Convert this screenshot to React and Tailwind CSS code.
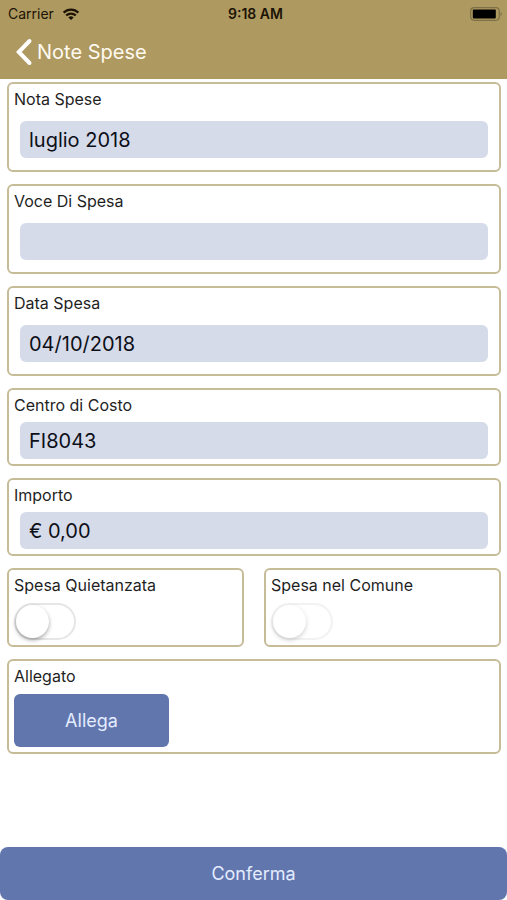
import { useState } from "react";

function StatusBar() {
  return (
    <div className="grid h-7 grid-cols-3 items-center pr-1 pl-2 text-sm text-[#1c1306]">
      <div className="flex items-center gap-2">
        <span>Carrier</span>
        <svg viewBox="0 0 18 13" className="h-3 w-[18px]" aria-hidden="true">
          <g fill="none" stroke="currentColor" strokeWidth="2.4">
            <path d="M1 5a11.3 11.3 0 0 1 16 0" />
            <path d="M3.8 8.2a7.4 7.4 0 0 1 10.4 0" />
          </g>
          <path d="M9 13 6.1 10.3a4.1 4.1 0 0 1 5.8 0z" fill="currentColor" />
        </svg>
      </div>
      <span className="text-center font-semibold">9:18 AM</span>
      <svg
        viewBox="0 0 33 14"
        className="h-[14px] w-[33px] justify-self-end"
        aria-hidden="true"
      >
        <rect
          x="0.7"
          y="0.7"
          width="28.6"
          height="12.6"
          rx="3.5"
          fill="none"
          stroke="#7d7147"
          strokeWidth="1.2"
        />
        <rect x="2.8" y="2.6" width="23" height="8.8" rx="0.8" fill="#000" />
        <path d="M30.6 4.8a2.6 2.6 0 0 1 0 4.4z" fill="#7d7147" />
      </svg>
    </div>
  );
}

function Header() {
  return (
    <header className="h-[79px] bg-[#ae9960]">
      <StatusBar />
      <nav className="flex h-12 items-center pl-4">
        <button type="button" className="flex items-center gap-1 text-white">
          <svg viewBox="0 0 17 28" className="h-7 w-[17px]" aria-hidden="true">
            <path
              d="M13.5 3 2.8 14l10.7 11"
              fill="none"
              stroke="currentColor"
              strokeWidth="4"
              strokeLinecap="round"
            />
          </svg>
          <span className="text-xl text-[#fffaf0]">Note Spese</span>
        </button>
      </nav>
    </header>
  );
}

function Card({ className = "", children }) {
  return (
    <div
      className={`rounded-md border-2 border-[#c6bc98] px-[5px] pt-[5px] ${className}`}
    >
      {children}
    </div>
  );
}

function Field({ id, label, value, onChange, spaced }) {
  return (
    <Card className={spaced ? "pb-3" : "pb-[5px]"}>
      <label htmlFor={id} className="block text-base leading-5">
        {label}
      </label>
      <div className={spaced ? "px-[6px] pt-3" : "px-[6px] pt-[7px]"}>
        <input
          id={id}
          type="text"
          value={value}
          onChange={(e) => onChange(id, e.target.value)}
          className="block h-[37px] w-full rounded-md bg-[#d6dbe9] px-[9px] text-xl text-[#0d0f18] outline-none"
        />
      </div>
    </Card>
  );
}

function Toggle({ id, label, checked, onChange, disabled }) {
  return (
    <Card className="pb-[5px]">
      <label htmlFor={id} className="block text-base leading-5">
        {label}
      </label>
      <input
        id={id}
        type="checkbox"
        role="switch"
        checked={checked}
        disabled={disabled}
        onChange={(e) => onChange(id, e.target.checked)}
        className="mt-2 block h-[37px] w-[62px] appearance-none rounded-full border-2 border-[#e6e6e8] bg-white before:block before:size-[33px] before:rounded-full before:bg-white before:shadow-[0_2px_4px_rgba(0,0,0,0.35)] checked:bg-[#6276ae] checked:before:translate-x-[25px] disabled:opacity-50"
      />
    </Card>
  );
}

function App() {
  const [form, setForm] = useState({
    nota: "luglio 2018",
    voce: "",
    data: "04/10/2018",
    centro: "FI8043",
    importo: "€ 0,00",
    quietanzata: false,
    comune: false,
  });

  const update = (id, value) => setForm({ ...form, [id]: value });

  return (
    <div className="flex min-h-screen flex-col bg-white font-[Inter,sans-serif] text-[#1f1f1f]">
      <Header />
      <form
        className="flex flex-1 flex-col"
        onSubmit={(e) => e.preventDefault()}
      >
        <div className="flex flex-col gap-3 pt-[3px] pr-[6px] pb-6 pl-[7px]">
          <Field id="nota" label="Nota Spese" value={form.nota} onChange={update} spaced />
          <Field id="voce" label="Voce Di Spesa" value={form.voce} onChange={update} spaced />
          <Field id="data" label="Data Spesa" value={form.data} onChange={update} spaced />
          <Field id="centro" label="Centro di Costo" value={form.centro} onChange={update} />
          <Field id="importo" label="Importo" value={form.importo} onChange={update} />

          <div className="grid grid-cols-2 gap-5">
            <Toggle
              id="quietanzata"
              label="Spesa Quietanzata"
              checked={form.quietanzata}
              onChange={update}
            />
            <Toggle
              id="comune"
              label="Spesa nel Comune"
              checked={form.comune}
              onChange={update}
              disabled
            />
          </div>

          <Card className="pb-[5px]">
            <p className="text-base leading-5">Allegato</p>
            <button
              type="button"
              className="mt-2 block h-[53px] w-[155px] rounded-md bg-[#6276ae] text-lg text-[#e4ecff]"
            >
              Allega
            </button>
          </Card>
        </div>

        <button
          type="submit"
          className="mt-auto h-[53px] w-full rounded-lg bg-[#6276ae] text-lg text-[#e4ecff]"
        >
          Conferma
        </button>
      </form>
    </div>
  );
}

export default App;
